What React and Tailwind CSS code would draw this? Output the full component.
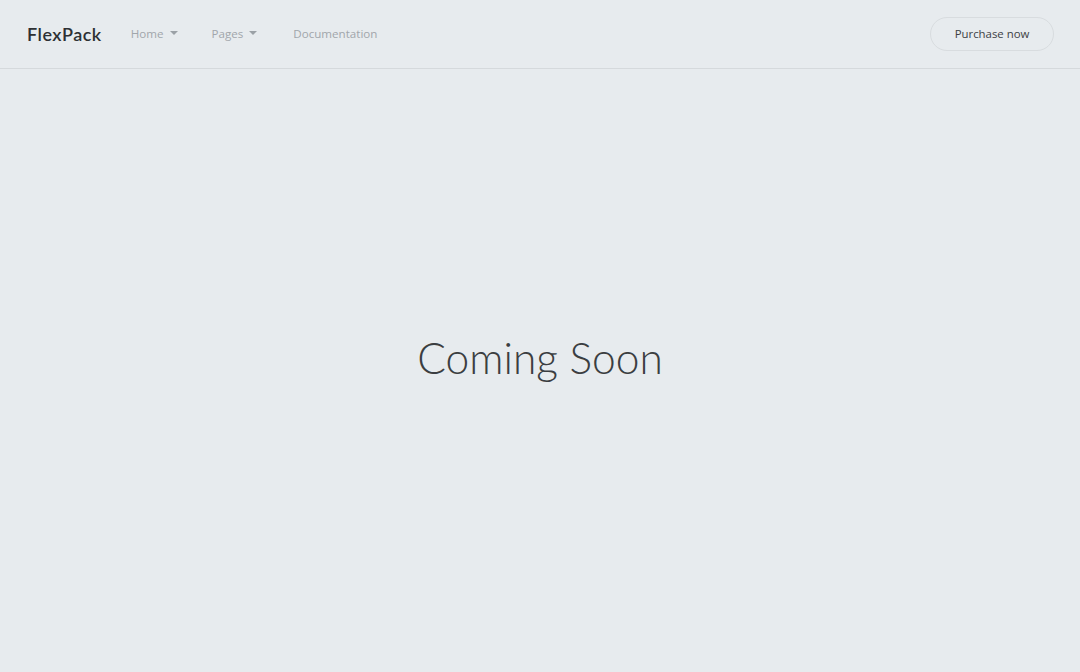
export default function App() {
  const Caret = () => (
    <span className="inline-block ml-[6px] w-0 h-0 border-l-[4px] border-r-[4px] border-t-[4px] border-l-transparent border-r-transparent border-t-[#9ba1a6] relative top-[-1px]" />
  );
  return (
    <div className="w-[1080px] h-[672px] bg-[#e7ebee] flex flex-col" style={{ fontFamily: '"Open Sans", sans-serif' }}>
      <header className="h-[69px] border-b border-[#d5d9dc] flex items-center pl-[27px] pr-[26px]">
        <div className="text-[18px] font-semibold text-[#2d3033] tracking-[0.5px]" style={{ fontFamily: 'Lato, sans-serif' }}>FlexPack</div>
        <nav className="flex items-center ml-[29px] text-[11.6px] text-[#a1a6ab]">
          <span className="flex items-center">Home<Caret /></span>
          <span className="flex items-center ml-[34px]">Pages<Caret /></span>
          <span className="ml-[36px]">Documentation</span>
        </nav>
        <div className="flex-1" />
        <button className="h-[34px] w-[124px] rounded-full border border-[#d8dcdf] text-[11.4px] text-[#3d4145] flex items-center justify-center">
          Purchase now
        </button>
      </header>
      <main className="flex-1 flex items-center justify-center pb-[26px]">
        <h1 className="text-[42.5px] font-light text-[#3b3e41]" style={{ fontFamily: 'Lato, sans-serif' }}>Coming Soon</h1>
      </main>
    </div>
  );
}
